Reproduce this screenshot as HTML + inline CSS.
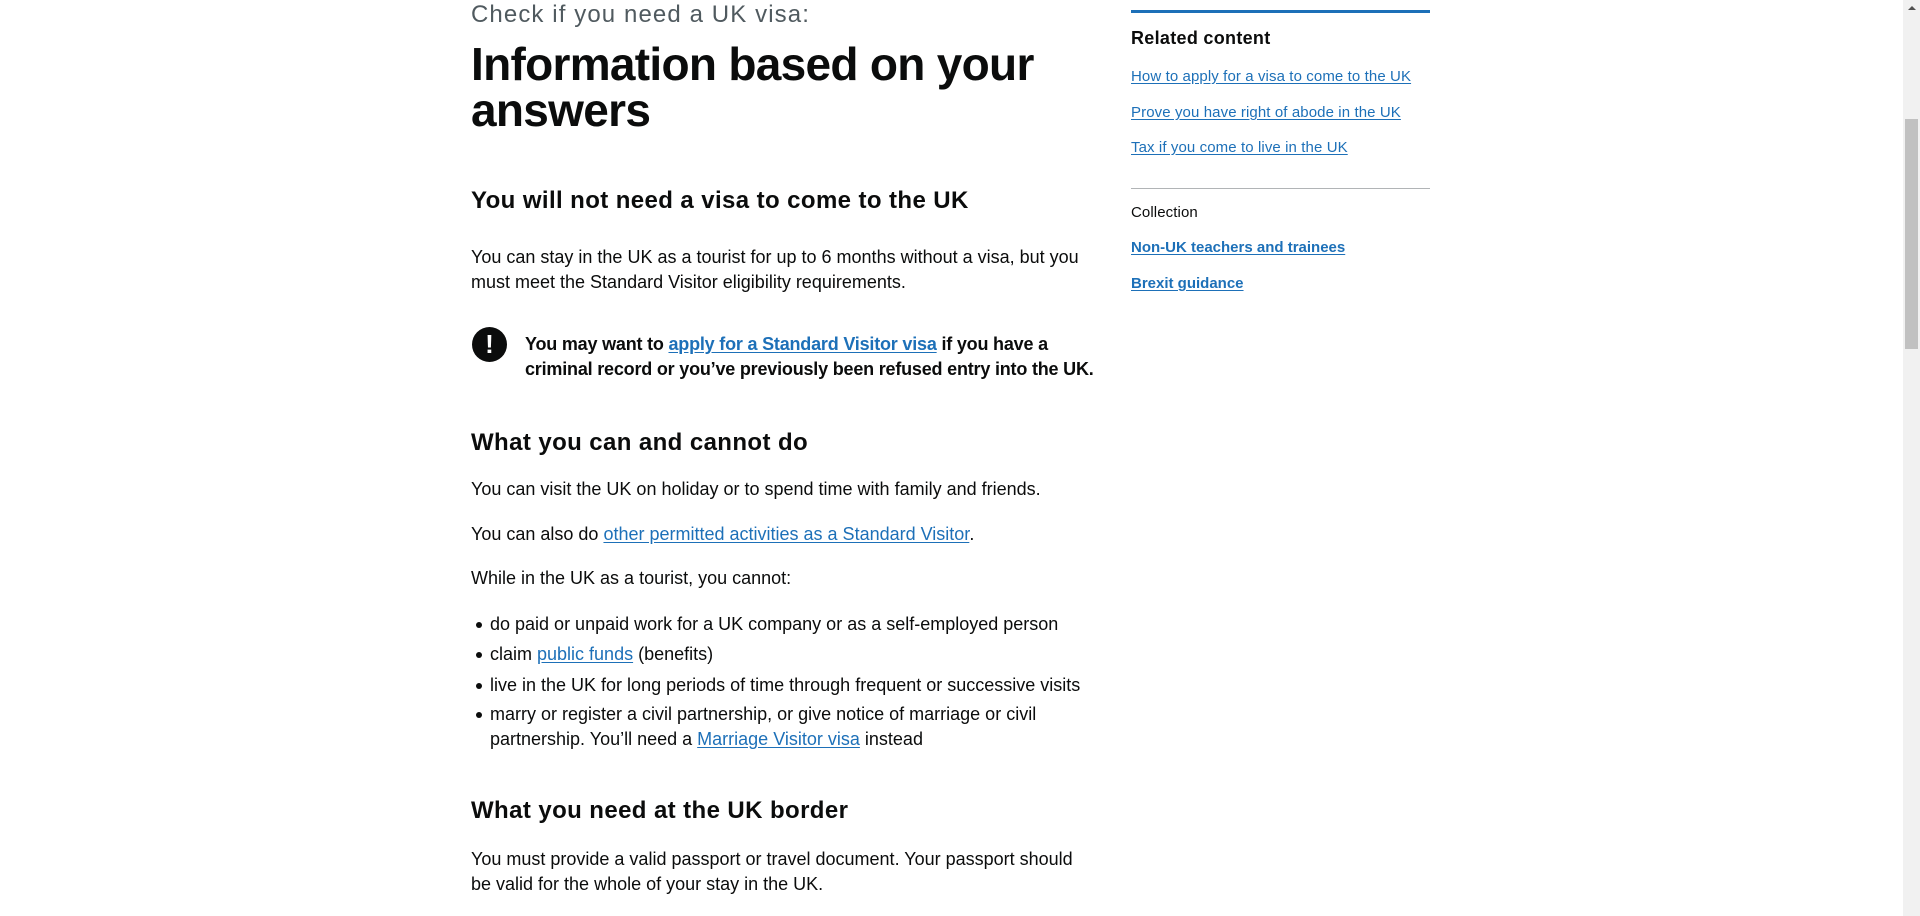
<!DOCTYPE html>
<html><head><meta charset="utf-8"><style>
html,body{margin:0;padding:0;width:1920px;height:916px;overflow:hidden;background:#fff;font-family:"Liberation Sans",sans-serif;color:#0b0c0c}
.a{position:absolute;white-space:nowrap}
.b{font-size:18px;line-height:25px;letter-spacing:0px}
.h2{font-size:24px;line-height:30px;font-weight:bold;letter-spacing:0.4px}
a{color:#1d70b8;text-decoration:underline;text-underline-offset:2px}
.s{font-size:15px;line-height:20px;letter-spacing:0.1px}
</style></head><body>
<div class="a" style="left:471px;top:0;font-size:24px;line-height:30px;color:#505a5f;letter-spacing:1.1px">Check if you need a UK visa:</div>
<div class="a" style="left:471px;top:41px;font-size:46px;line-height:46px;font-weight:bold;letter-spacing:-0.7px">Information based on your<br>answers</div>
<div class="a h2" style="left:471px;top:186px">You will not need a visa to come to the UK</div>
<div class="a b" style="left:471px;top:245px">You can stay in the UK as a tourist for up to 6 months without a visa, but you<br>must meet the Standard Visitor eligibility requirements.</div>
<div class="a" style="left:472px;top:327px;width:35px;height:35px;border-radius:50%;background:#0b0c0c;color:#fff;font-weight:bold;font-size:26px;line-height:35px;text-align:center">!</div>
<div class="a b" style="left:525px;top:332px;font-weight:bold;letter-spacing:-0.2px">You may want to <a href="#">apply for a Standard Visitor visa</a> if you have a<br>criminal record or you’ve previously been refused entry into the UK.</div>
<div class="a h2" style="left:471px;top:428px">What you can and cannot do</div>
<div class="a b" style="left:471px;top:477px">You can visit the UK on holiday or to spend time with family and friends.</div>
<div class="a b" style="left:471px;top:522px">You can also do <a href="#">other permitted activities as a Standard Visitor</a>.</div>
<div class="a b" style="left:471px;top:566px">While in the UK as a tourist, you cannot:</div>
<div class="a" style="left:476px;top:622px;width:6px;height:6px;border-radius:50%;background:#0b0c0c"></div>
<div class="a" style="left:476px;top:652px;width:6px;height:6px;border-radius:50%;background:#0b0c0c"></div>
<div class="a" style="left:476px;top:683px;width:6px;height:6px;border-radius:50%;background:#0b0c0c"></div>
<div class="a" style="left:476px;top:712px;width:6px;height:6px;border-radius:50%;background:#0b0c0c"></div>
<div class="a b" style="left:490px;top:612px">do paid or unpaid work for a UK company or as a self-employed person</div>
<div class="a b" style="left:490px;top:642px">claim <a href="#">public funds</a> (benefits)</div>
<div class="a b" style="left:490px;top:673px">live in the UK for long periods of time through frequent or successive visits</div>
<div class="a b" style="left:490px;top:702px">marry or register a civil partnership, or give notice of marriage or civil<br>partnership. You’ll need a <a href="#">Marriage Visitor visa</a> instead</div>
<div class="a h2" style="left:471px;top:796px">What you need at the UK border</div>
<div class="a b" style="left:471px;top:847px">You must provide a valid passport or travel document. Your passport should<br>be valid for the whole of your stay in the UK.</div>

<div class="a" style="left:1131px;top:10px;width:299px;height:3px;background:#1d70b8"></div>
<div class="a b" style="left:1131px;top:26px;font-weight:bold;letter-spacing:0.3px">Related content</div>
<div class="a s" style="left:1131px;top:67px"><a href="#">How to apply for a visa to come to the UK</a></div>
<div class="a s" style="left:1131px;top:103px"><a href="#">Prove you have right of abode in the UK</a></div>
<div class="a s" style="left:1131px;top:138px"><a href="#">Tax if you come to live in the UK</a></div>
<div class="a" style="left:1131px;top:188px;width:299px;height:1px;background:#b1b4b6"></div>
<div class="a s" style="left:1131px;top:203px">Collection</div>
<div class="a s" style="left:1131px;top:238px;font-weight:bold;letter-spacing:0px"><a href="#">Non-UK teachers and trainees</a></div>
<div class="a s" style="left:1131px;top:274px;font-weight:bold;letter-spacing:0px"><a href="#">Brexit guidance</a></div>

<div class="a" style="left:1903px;top:0;width:17px;height:916px;background:#f1f1f1"></div>
<div class="a" style="left:1905px;top:119px;width:13px;height:230px;background:#c1c1c1"></div>
<div class="a" style="left:1908px;top:6px;width:0;height:0;border-left:4px solid transparent;border-right:4px solid transparent;border-bottom:4px solid #505050"></div>
</body></html>
